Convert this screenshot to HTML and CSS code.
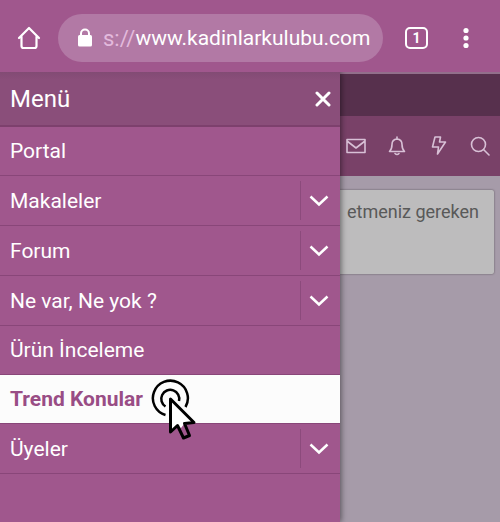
FILE: index.html
```html
<!DOCTYPE html>
<html lang="tr">
<head>
  <meta charset="UTF-8">
  <meta name="viewport" content="width=device-width, initial-scale=1">
  <title>Kadınlar Kulübü</title>
  <link rel="stylesheet" href="styles.css">
</head>
<body>

  <header class="browser-bar">
    <button class="icon-btn home-btn" aria-label="Ana sayfa">
      <svg width="24" height="24" viewBox="0 0 24 24" fill="none" stroke="#fff" stroke-width="2.200" stroke-linejoin="round" stroke-linecap="round">
        <path d="M2 12 L12 2 L22 12 M4.500 10.500 V20 Q4.500 22 6.500 22 H17.500 Q19.500 22 19.500 20 V10.500"/>
      </svg>
    </button>
    <div class="address">
      <svg width="16" height="20" viewBox="0 0 16 20">
        <path d="M4 8 V5.500 A4 4 0 0 1 12 5.500 V8" fill="none" stroke="#fff" stroke-width="2"/>
        <rect x="1" y="7" width="14" height="11.500" rx="1.500" fill="#fff"/>
      </svg>
      <label class="scheme" for="url">s://</label>
      <input id="url" class="url" type="text" value="www.kadinlarkulubu.com">
    </div>
    <button class="icon-btn tab-btn" aria-label="Sekmeler">1</button>
    <button class="icon-btn more-btn" aria-label="Diğer">
      <svg width="6" height="22" viewBox="0 0 6 22" fill="#fff">
        <circle cx="3" cy="3.500" r="2.600"/><circle cx="3" cy="11" r="2.600"/><circle cx="3" cy="18.500" r="2.600"/>
      </svg>
    </button>
  </header>

  <div class="screen">
    <nav class="drawer">
      <div class="drawer-header">
        <span>Menü</span>
        <button class="icon-btn" aria-label="Kapat">
          <svg width="16" height="16" viewBox="0 0 16 16" stroke="#fff" stroke-width="3" stroke-linecap="round">
            <path d="M2 2 L14 14 M14 2 L2 14"/>
          </svg>
        </button>
      </div>
      <ul class="menu">
        <li><a href="#">Portal</a></li>
        <li>
          <a href="#">Makaleler</a>
          <button class="toggle" aria-label="Makaleler alt menü"><svg width="20" height="12" viewBox="0 0 20 12"><path d="M1.500 1.500 L10 9.500 L18.500 1.500"/></svg></button>
        </li>
        <li>
          <a href="#">Forum</a>
          <button class="toggle" aria-label="Forum alt menü"><svg width="20" height="12" viewBox="0 0 20 12"><path d="M1.500 1.500 L10 9.500 L18.500 1.500"/></svg></button>
        </li>
        <li>
          <a href="#">Ne var, Ne yok ?</a>
          <button class="toggle" aria-label="Ne var, Ne yok alt menü"><svg width="20" height="12" viewBox="0 0 20 12"><path d="M1.500 1.500 L10 9.500 L18.500 1.500"/></svg></button>
        </li>
        <li><a href="#">Ürün İnceleme</a></li>
        <li class="active">
          <a href="#">Trend Konular</a>
          <svg class="pointer" width="48" height="64" viewBox="0 0 48 64" fill="none" stroke="#000" stroke-width="3">
            <path d="M15.500 37 A17.500 17.500 0 1 1 35.500 29" stroke-width="2.500"/>
            <path d="M15.500 28.500 A9 9 0 1 1 29 23" stroke-width="2.500"/>
            <path d="M20.500 22 V54 L27.500 47.500 L31 50 L34.500 45.500 L44 44.500 Z" fill="#fff" stroke="none"/>
            <path d="M20.500 21 V54 L27.500 47.500 L33.500 60 L39.500 57.500 L34.500 45.500 L44 44.500 Z" stroke-linejoin="round"/>
          </svg>
        </li>
        <li>
          <a href="#">Üyeler</a>
          <button class="toggle" aria-label="Üyeler alt menü"><svg width="20" height="12" viewBox="0 0 20 12"><path d="M1.500 1.500 L10 9.500 L18.500 1.500"/></svg></button>
        </li>
      </ul>
    </nav>

    <main class="page">
      <div class="top-strip"></div>
      <div class="site-nav">
        <button class="icon-btn" aria-label="Mesajlar">
          <svg width="22" height="22" viewBox="0 0 22 22">
            <path d="M2 4.500 H20 V17.500 H2 Z M2 6 L11 13 L20 6"/>
          </svg>
        </button>
        <button class="icon-btn" aria-label="Bildirimler">
          <svg width="22" height="22" viewBox="0 0 22 22">
            <path d="M3.500 16.500 Q6 14 6 9.500 Q6 4.500 11 4 Q16 4.500 16 9.500 Q16 14 18.500 16.500 Z M11 2 V4 M9 18.500 Q11 20.500 13 18.500"/>
          </svg>
        </button>
        <button class="icon-btn" aria-label="Yeni konular">
          <svg width="22" height="22" viewBox="0 0 22 22">
            <path d="M7 2 H12.500 L11.500 7 H17.500 L9.500 19 L10.500 12 H4.500 Z"/>
          </svg>
        </button>
        <button class="icon-btn" aria-label="Ara">
          <svg width="22" height="22" viewBox="0 0 22 22">
            <circle cx="9.500" cy="9.500" r="7"/><path d="M14.500 14.500 L20 20"/>
          </svg>
        </button>
      </div>
      <div class="content">
        <p class="notice">etmeniz gereken</p>
      </div>
    </main>
  </div>

</body>
</html>
```

FILE: styles.css
```css
* {
  box-sizing: border-box;
}

body {
  margin: 0;
  min-height: 100vh;
  display: flex;
  flex-direction: column;
  background: #a0578d;
  font-family: Roboto, sans-serif;
  font-size: 21px;
  color: #fff;
}

button {
  font-family: inherit;
  color: inherit;
  cursor: pointer;
}

.icon-btn {
  display: flex;
  align-items: center;
  justify-content: center;
  padding: 0;
  border: none;
  background: none;
}

.browser-bar {
  position: relative;
  z-index: 2;
  display: flex;
  align-items: center;
  height: 72px;
  padding: 4px 31px 0 17px;
  background: #a0578d;
}

.address {
  flex: 1;
  min-width: 0;
  display: flex;
  align-items: center;
  height: 48px;
  margin: 0 22px 0 17px;
  padding: 0 8px 0 19px;
  border-radius: 24px;
  background: #b279a5;
  font-size: 22px;
}

.scheme {
  margin-left: 10px;
  color: #e3b9dc;
}

.url {
  flex: 1;
  min-width: 0;
  padding: 0;
  border: none;
  outline: none;
  background: none;
  color: #fff;
  font: inherit;
  font-size: 21px;
}

.tab-btn {
  width: 23px;
  height: 22px;
  border: 2px solid #fff;
  border-radius: 5px;
  font-size: 14px;
  font-weight: bold;
}

.more-btn {
  margin-left: 35px;
}

.screen {
  flex: 1;
  display: flex;
}

.drawer {
  position: relative;
  width: 68%;
  background: #a0578d;
  box-shadow: 1px 0 6px rgba(0, 0, 0, 0.5);
}

.drawer-header {
  display: flex;
  align-items: center;
  justify-content: space-between;
  height: 55px;
  padding: 0 9px 0 10px;
  background: linear-gradient(#824b74, #8a4e7a 8px);
  border-bottom: 2px solid #7d406d;
  font-size: 24px;
}

.menu {
  margin: 0;
  padding: 0;
  list-style: none;
}

.menu li {
  position: relative;
  display: flex;
  align-items: center;
  border-bottom: 1px solid #894679;
}

.menu a {
  flex: 1;
  padding: 0 10px;
  line-height: 48px;
  color: #fff;
  text-decoration: none;
}

.toggle {
  display: flex;
  align-items: center;
  justify-content: center;
  width: 40px;
  height: 39px;
  margin: 5px 0;
  padding: 0 3px 0 0;
  border: none;
  border-left: 1px solid #8c4a7c;
  background: none;
}

.toggle path {
  fill: none;
  stroke: #fff;
  stroke-width: 2.5;
}

.menu .active {
  background: #fcfcfc;
}

.menu .active a {
  color: #994d85;
  font-weight: bold;
}

/* click marker over the selected item */
.pointer {
  position: absolute;
  left: 150px;
  top: 3px;
  z-index: 1;
}

.page {
  flex: 1;
  min-width: 0;
  background: #a69ba9;
}

.top-strip {
  height: 44px;
  background: #57304d;
  border-top: 2px solid #926f8b;
}

.site-nav {
  display: flex;
  align-items: center;
  justify-content: space-between;
  height: 60px;
  padding: 0 9px 0 5px;
  background: #794168;
}

.site-nav svg {
  fill: none;
  stroke: #d8c0d6;
  stroke-width: 1.6;
  stroke-linejoin: round;
  stroke-linecap: round;
}

.content {
  padding: 14px 6px 0 0;
}

.notice {
  height: 84px;
  margin: 0;
  padding: 10px 15px 0 0;
  border-radius: 0 2px 2px 0;
  background: #bdbcbd;
  box-shadow: 0 0 2px rgba(0, 0, 0, 0.5);
  color: #595959;
  font-size: 18px;
  line-height: 24px;
  text-align: right;
  white-space: nowrap;
}
```
